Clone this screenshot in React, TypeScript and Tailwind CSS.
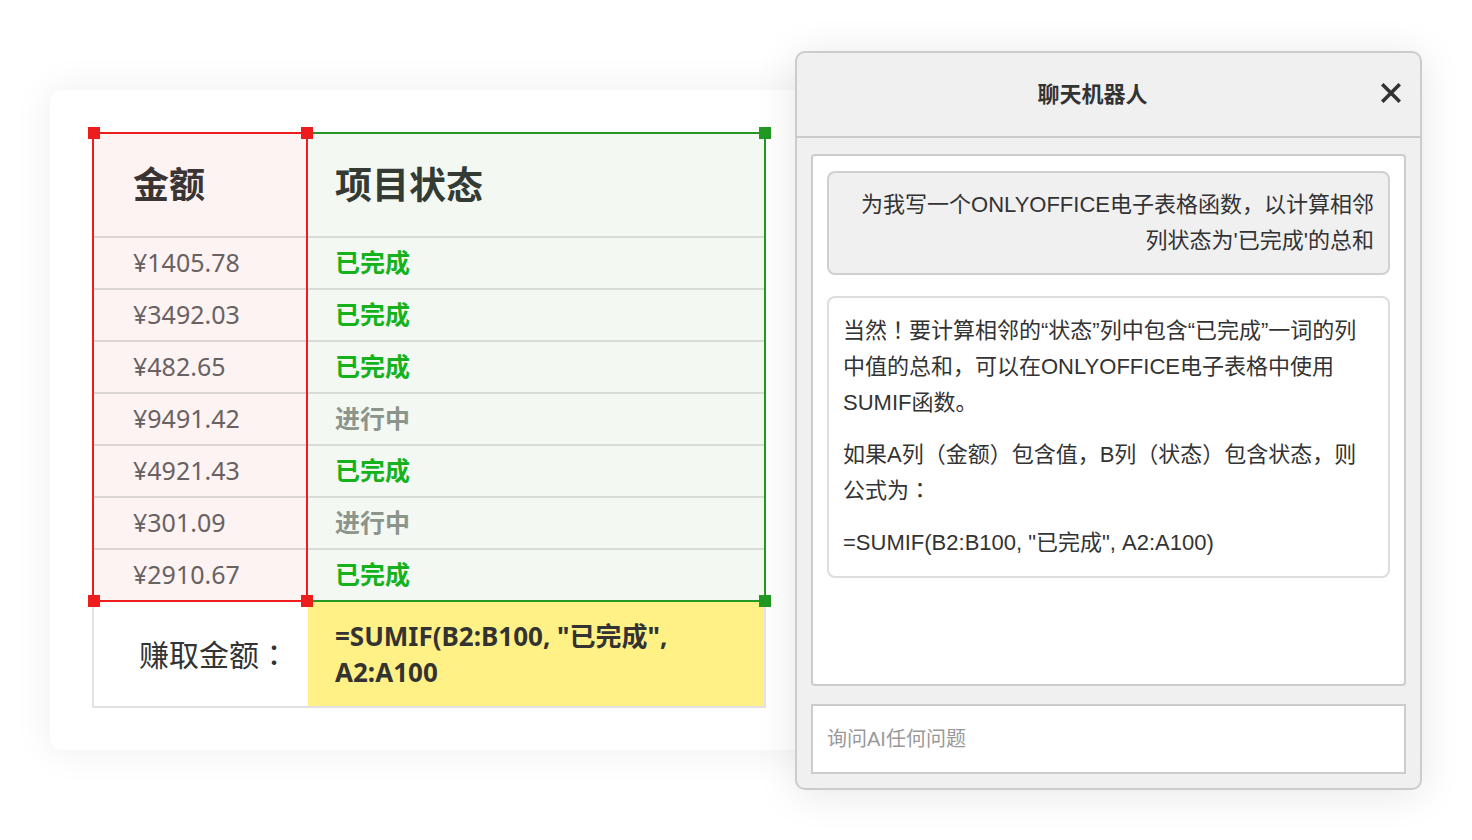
import React from "react";

const amounts = ["¥1405.78", "¥3492.03", "¥482.65", "¥9491.42", "¥4921.43", "¥301.09", "¥2910.67"];
const statuses = [true, true, true, false, true, false, true];

function Square({ color, left, top }: { color: string; left: string; top: string }) {
  return <div className={`absolute w-[12px] h-[12px] ${color} ${left} ${top}`} />;
}

function P({ children, base }: { children: React.ReactNode; base: string }) {
  return <span style={{ fontFamily: `"${base}", "Noto Sans CJK JP", sans-serif` }}>{children}</span>;
}

export default function App() {
  return (
    <div
      className="w-[1472px] h-[840px] bg-white flex items-start overflow-hidden"
      style={{ fontFamily: '"Noto Sans", "Noto Sans CJK SC", sans-serif' }}
    >
      {/* Spreadsheet card */}
      <div className="ml-[50px] mt-[90px] w-[760px] h-[660px] shrink-0 bg-white rounded-[12px] shadow-[0_0_40px_rgba(0,0,0,0.07)] pt-[42px] pl-[42px]">
        <div className="relative w-[674px]">
          <div className="flex">
            {/* Column A */}
            <div className="w-[216px] border-2 border-[#ee1d1d] bg-[#fcf3f2]">
              <div className="h-[102px] flex items-center pl-[39px] text-[36px] font-bold text-[#3b3434]">金额</div>
              {amounts.map((a) => (
                <div key={a} className="h-[52px] border-t-2 border-[#dad6d5] flex items-center pl-[39px] text-[25px] text-[#686262]">
                  {a}
                </div>
              ))}
            </div>
            {/* Column B */}
            <div className="w-[458px] border-y-2 border-r-2 border-[#229922] bg-[#f3f8f2]">
              <div className="h-[102px] flex items-center pl-[27px] text-[37px] font-bold text-[#343b34]">项目状态</div>
              {statuses.map((s, i) => (
                <div
                  key={i}
                  className={`h-[52px] border-t-2 border-[#d8dbd7] flex items-center pl-[27px] text-[25px] font-bold ${
                    s ? "text-[#16b21b]" : "text-[#8c948c]"
                  }`}
                >
                  {s ? "已完成" : "进行中"}
                </div>
              ))}
            </div>
          </div>
          {/* Footer row */}
          <div className="flex">
            <div className="w-[216px] h-[106px] border-l-2 border-b-2 border-[#e2e2e2] bg-white flex items-center pl-[45px] text-[30px] text-[#333]">
              <span>
                赚取金额<P base="Noto Sans">：</P>
              </span>
            </div>
            <div className="w-[458px] h-[106px] border-r-2 border-b-2 border-[#e2e2e2] bg-[#fff185] flex items-center pl-[27px] text-[26px] leading-[36px] font-bold text-[#333]">
              <div>
                =SUMIF(B2:B100, "已完成",
                <br />
                A2:A100
              </div>
            </div>
          </div>
          {/* Selection handles */}
          <Square color="bg-[#229922]" left="left-[667px]" top="top-[-5px]" />
          <Square color="bg-[#229922]" left="left-[667px]" top="top-[463px]" />
          <Square color="bg-[#ee1d1d]" left="left-[-4px]" top="top-[-5px]" />
          <Square color="bg-[#ee1d1d]" left="left-[209px]" top="top-[-5px]" />
          <Square color="bg-[#ee1d1d]" left="left-[-4px]" top="top-[463px]" />
          <Square color="bg-[#ee1d1d]" left="left-[209px]" top="top-[463px]" />
        </div>
      </div>

      {/* Chat panel */}
      <div
        className="relative z-10 ml-[-15px] mt-[51px] w-[627px] h-[739px] shrink-0 bg-[#f0f0f0] border-2 border-[#cccccc] rounded-[10px] shadow-[0_4px_40px_rgba(0,0,0,0.1)] flex flex-col text-[#333]"
        style={{ fontFamily: '"Liberation Sans", "Noto Sans CJK SC", sans-serif' }}
      >
        <div className="relative h-[85px] border-b-2 border-[#cccccc] flex items-center justify-center pr-[32px] shrink-0">
          <span className="text-[22px] font-bold text-[#333]">聊天机器人</span>
          <svg className="absolute right-[19px] top-[30px]" width="20" height="20" viewBox="0 0 20 20">
            <path d="M2.5 2.5 L17.5 17.5 M17.5 2.5 L2.5 17.5" stroke="#333" strokeWidth="3.6" strokeLinecap="square" />
          </svg>
        </div>
        <div className="flex-1 flex flex-col px-[14px] pt-[16px] pb-[14px]">
          <div className="flex-1 bg-white border-2 border-[#cccccc] rounded-[4px] px-[14px] pt-[15px]">
            <div className="bg-[#f0f0f0] border-2 border-[#d0d0d0] rounded-[8px] px-[14px] py-[14px] text-right text-[22px] leading-[36px]">
              为我写一个ONLYOFFICE电子表格函数，以计算相邻列状态为'已完成'的总和
            </div>
            <div className="mt-[21px] bg-white border-2 border-[#dddddd] rounded-[8px] px-[14px] py-[15px] text-[22px] leading-[36px]">
              <p>
                当然<P base="Liberation Sans">！</P>要计算相邻的“状态”列中包含“已完成”一词的列中值的总和，可以在ONLYOFFICE电子表格中使用SUMIF函数。
              </p>
              <p className="mt-[16px]">
                如果A列（金额）包含值，B列（状态）包含状态，则公式为<P base="Liberation Sans">：</P>
              </p>
              <p className="mt-[16px]">=SUMIF(B2:B100, "已完成", A2:A100)</p>
            </div>
          </div>
          <div className="mt-[18px] h-[70px] bg-white border-2 border-[#cccccc] flex items-center px-[14px] text-[20px] text-[#999]">
            询问AI任何问题
          </div>
        </div>
      </div>
    </div>
  );
}
